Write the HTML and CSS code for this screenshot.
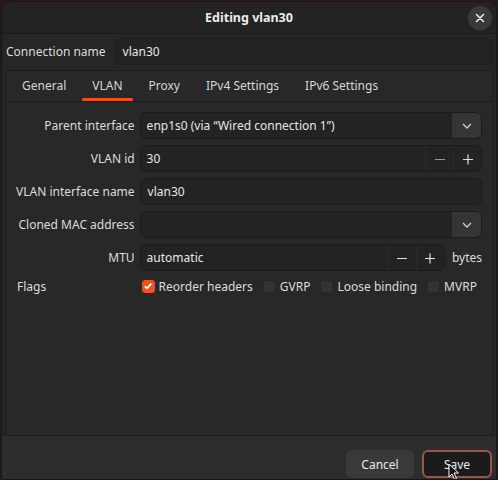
FILE: index.html
```html
<!DOCTYPE html>
<html>
<head>
<meta charset="utf-8">
<link rel="stylesheet" href="styles.css">
</head>
<body>
<div class="window">
  <header class="titlebar">
    <span class="title">Editing vlan30</span>
    <span class="close"><svg width="10" height="10" viewBox="0 0 10 10"><path d="M1.5 1.5 L8.5 8.5 M8.5 1.5 L1.5 8.5" stroke="#e8e8e8" stroke-width="1.6" stroke-linecap="round"/></svg></span>
  </header>
  <main class="content">
    <div class="conn-row">
      <span class="label">Connection name</span>
      <div class="entry grow">vlan30</div>
    </div>
    <section class="notebook">
      <nav class="tabs">
        <span class="tab">General</span>
        <span class="tab active">VLAN</span>
        <span class="tab">Proxy</span>
        <span class="tab">IPv4 Settings</span>
        <span class="tab">IPv6 Settings</span>
      </nav>
      <div class="page">
        <div class="form">
          <span class="flabel">Parent interface</span>
          <div class="combo">
            <span class="combo-text">enp1s0 (via “Wired connection 1”)</span>
            <span class="combo-btn"><svg width="12" height="8" viewBox="0 0 12 8"><path d="M2 2 L6 6 L10 2" fill="none" stroke="#d0d0d0" stroke-width="1.3"/></svg></span>
          </div>

          <span class="flabel">VLAN id</span>
          <div class="spin">
            <span class="spin-text">30</span>
            <span class="spin-btn"><svg width="12" height="12" viewBox="0 0 12 12"><path d="M1 6.5 H11" stroke="#9a9a9a" stroke-width="1.2"/></svg></span>
            <span class="spin-btn"><svg width="12" height="12" viewBox="0 0 12 12"><path d="M1 6.5 H11 M6 1.5 V11.5" stroke="#e0e0e0" stroke-width="1.2"/></svg></span>
          </div>

          <span class="flabel">VLAN interface name</span>
          <div class="entry">vlan30</div>

          <span class="flabel">Cloned MAC address</span>
          <div class="combo">
            <span class="combo-text"></span>
            <span class="combo-btn"><svg width="12" height="8" viewBox="0 0 12 8"><path d="M2 2 L6 6 L10 2" fill="none" stroke="#d0d0d0" stroke-width="1.3"/></svg></span>
          </div>

          <span class="flabel">MTU</span>
          <div class="mtu-row">
            <div class="spin grow">
              <span class="spin-text">automatic</span>
              <span class="spin-btn"><svg width="12" height="12" viewBox="0 0 12 12"><path d="M1 6.5 H11" stroke="#e0e0e0" stroke-width="1.2"/></svg></span>
              <span class="spin-btn"><svg width="12" height="12" viewBox="0 0 12 12"><path d="M1 6.5 H11 M6 1.5 V11.5" stroke="#e0e0e0" stroke-width="1.2"/></svg></span>
            </div>
            <span class="unit">bytes</span>
          </div>

          <span class="flabel flags-label">Flags</span>
          <div class="flags">
            <label class="check"><span class="box checked"><svg width="10" height="10" viewBox="0 0 10 10"><path d="M1.8 5.2 L4 7.4 L8.4 2.6" fill="none" stroke="#fff" stroke-width="1.6"/></svg></span>Reorder headers</label>
            <label class="check"><span class="box"></span>GVRP</label>
            <label class="check"><span class="box"></span>Loose binding</label>
            <label class="check"><span class="box"></span>MVRP</label>
          </div>
        </div>
      </div>
    </section>
  </main>
  <footer class="actions">
    <span class="btn">Cancel</span>
    <span class="btn primary">Save</span>
  </footer>
  <svg class="cursor" width="12" height="18" viewBox="0 0 12 18"><path d="M1 1 L1 14 L4 11 L6.5 16.5 L8.5 15.5 L6 10 L10.5 10 Z" fill="#111" stroke="#fff" stroke-width="1"/></svg>
</div>
</body>
</html>
```
FILE: styles.css
```css
* { box-sizing: border-box; }
html, body { margin: 0; padding: 0; }
body {
  width: 498px;
  height: 480px;
  background: #2a1626;
  font-family: "Noto Sans", "DejaVu Sans", sans-serif;
  font-size: 12px;
  color: #e6e6e6;
  overflow: hidden;
}
.window {
  position: relative;
  margin: 1px 1px 0 1px;
  height: 479px;
  background: #2d2d2d;
  border: 1px solid #161616;
  border-radius: 10px 10px 0 0;
  display: flex;
  flex-direction: column;
  overflow: hidden;
}
.titlebar {
  height: 32px;
  flex: none;
  background: #232323;
  border-bottom: 1px solid #1a1a1a;
  display: flex;
  align-items: center;
  justify-content: center;
  position: relative;
}
.title {
  font-weight: bold;
  font-size: 12.5px;
  color: #ececec;
}
.close {
  position: absolute;
  right: 4px;
  top: 4px;
  width: 24px;
  height: 24px;
  border-radius: 50%;
  background: #3a3a3a;
  display: flex;
  align-items: center;
  justify-content: center;
}
.content {
  flex: none;
  padding: 3px 3px 0 3px;
  background: #262626;
}
.conn-row {
  display: flex;
  align-items: center;
  gap: 9px;
  padding-left: 1px;
  height: 28px;
}
.label { color: #dcdcdc; white-space: nowrap; }
.entry {
  height: 27px;
  background: #232323;
  border: 1px solid #1c1c1c;
  border-radius: 6px;
  display: flex;
  align-items: center;
  padding: 0 7px;
  color: #e6e6e6;
}
.grow { flex: 1; }
.notebook {
  margin-top: 5px;
  border: 1px solid #1c1c1c;
  border-bottom: none;
  background: #282828;
  height: 366px;
  display: flex;
  flex-direction: column;
}
.tabs {
  height: 31px;
  display: flex;
  align-items: stretch;
  padding-left: 3px;
  border-bottom: 1px solid #1c1c1c;
  background: #282828;
}
.tab {
  display: flex;
  align-items: center;
  padding: 0 13px 1px;
  color: #d6d6d6;
  position: relative;
  white-space: nowrap;
}
.tab.active::after {
  content: "";
  position: absolute;
  left: 3px;
  right: 3px;
  bottom: 0;
  height: 3px;
  background: #e95420;
  border-radius: 2px;
}
.page {
  flex: 1;
  padding: 10px 10px 0 10px;
  background: #282828;
  border-bottom: 1px solid #1c1c1c;
}
.form {
  display: grid;
  grid-template-columns: auto 1fr;
  column-gap: 5px;
  row-gap: 6px;
  align-items: center;
}
.flabel {
  text-align: right;
  color: #dcdcdc;
  white-space: nowrap;
}
.flags-label {
  text-align: left;
  padding-left: 1px;
}
.combo, .spin {
  height: 27px;
  background: #232323;
  border: 1px solid #1c1c1c;
  border-radius: 6px;
  display: flex;
  align-items: stretch;
  overflow: hidden;
}
.combo-text, .spin-text {
  flex: 1;
  display: flex;
  align-items: center;
  padding-left: 6px;
  white-space: nowrap;
}
.combo-btn {
  width: 29px;
  background: #353535;
  display: flex;
  align-items: center;
  justify-content: center;
}
.spin-btn {
  width: 28px;
  border-left: 1px solid #2a2a2a;
  display: flex;
  align-items: center;
  justify-content: center;
}
.mtu-row {
  display: flex;
  align-items: center;
  gap: 7px;
}
.unit { color: #dcdcdc; }
.flags {
  display: flex;
  align-items: center;
  gap: 10px;
  height: 18px;
  padding-left: 2px;
  white-space: nowrap;
}
.check {
  display: flex;
  align-items: center;
  gap: 4px;
  color: #dcdcdc;
}
.box {
  width: 13px;
  height: 13px;
  border-radius: 3px;
  background: #333;
  border: 1px solid #262626;
  display: flex;
  align-items: center;
  justify-content: center;
  flex: none;
}
.box.checked {
  background: #e95420;
  border-color: #e95420;
}
.actions {
  flex: 1;
  background: #2d2d2d;
  display: flex;
  justify-content: flex-end;
  align-items: center;
  gap: 8px;
  padding: 13px 4px 0 0;
}
.btn {
  height: 28px;
  width: 68px;
  border-radius: 6px;
  background: #393939;
  display: flex;
  align-items: center;
  justify-content: center;
  color: #e8e8e8;
}
.btn.primary {
  width: 70px;
  background: #1b1b1b;
  border: 2px solid #9a5646;
}
.cursor {
  position: absolute;
  left: 446px;
  top: 461px;
}
```
